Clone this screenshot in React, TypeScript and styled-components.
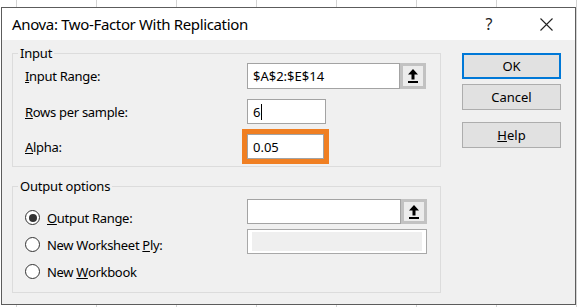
import React from "react";
import styled, { createGlobalStyle } from "styled-components";

const Global = createGlobalStyle`
  html, body { margin: 0; padding: 0; background: #fff; }
  body { font-family: "Segoe UI", "Noto Sans", "Liberation Sans", sans-serif; }
  * { box-sizing: border-box; }
`;

const FONT = `"Segoe UI", "Noto Sans", "Liberation Sans", sans-serif`;

const Page = styled.div`
  width: 577px;
  height: 307px;
  overflow: hidden;
  background-color: #fff;
  background-image: linear-gradient(to right, #d4d4d4 1px, transparent 1px);
  background-size: 80px 100%;
  background-position: 16px 0;
  padding: 7px 0 0 1px;
`;

const Dialog = styled.div`
  width: 575px;
  height: 298px;
  border: 1px solid #5c5c5c;
  background: #f0f0f0;
  display: flex;
  flex-direction: column;
  font-family: ${FONT};
  color: #000;
`;

const TitleBar = styled.div`
  height: 32px;
  flex: none;
  background: #fff;
  display: flex;
  align-items: center;
  padding-left: 10px;
`;

const Title = styled.div`
  flex: 1;
  font-size: 15px;
  line-height: 20px;
  letter-spacing: -0.35px;
  color: #000;
`;

const TitleButton = styled.div<{ $w: number }>`
  width: ${(p) => p.$w}px;
  height: 32px;
  display: flex;
  align-items: center;
  justify-content: center;
  font-size: 16px;
  color: #222;
`;

const Body = styled.div`
  display: flex;
  align-items: flex-start;
  padding: 4px 0 0 10px;
`;

const LeftCol = styled.div`
  width: 429px;
  display: flex;
  flex-direction: column;
  gap: 10px;
`;

const Group = styled.fieldset`
  margin: 0;
  padding: 0;
  border: 1px solid #dcdcdc;
  min-width: 0;
`;

const Legend = styled.legend`
  margin-left: 5px;
  padding: 0 2px;
  font-size: 13px;
  line-height: 18px;
  letter-spacing: -0.2px;
`;

const InputGrid = styled.div`
  display: grid;
  grid-template-columns: 222px auto;
  grid-template-rows: 26px 25px 25px;
  row-gap: 10px;
  padding: 1px 0 7px 12px;
  align-items: center;
`;

const Label = styled.div`
  font-size: 13px;
  line-height: 18px;
  letter-spacing: -0.3px;
  white-space: nowrap;
`;

const FieldWrap = styled.div<{ $w: number }>`
  width: ${(p) => p.$w}px;
  height: 100%;
  display: flex;
`;

const TextBox = styled.div<{ $w?: number; $highlight?: boolean }>`
  ${(p) => (p.$w ? `width: ${p.$w}px;` : "flex: 1;")}
  height: 100%;
  background: #fff;
  border: 1px solid #a3a3a3;
  font-size: 13px;
  line-height: 18px;
  padding: 0 5px;
  display: flex;
  align-items: center;
  ${(p) => (p.$highlight ? "outline: 5px solid #f07f22; outline-offset: 0;" : "")}
`;

const Caret = styled.span`
  display: inline-block;
  width: 1px;
  height: 16px;
  background: #000;
  margin-left: 1px;
`;

const UploadBtn = styled.div`
  width: 26px;
  height: 100%;
  border: 3px solid #c2c2c2;
  background: #ececec;
  display: flex;
  align-items: center;
  justify-content: center;
`;

const OutputGrid = styled.div`
  display: grid;
  grid-template-columns: 222px auto;
  padding: 0 0 7px 12px;
`;

const RadioList = styled.div`
  display: flex;
  flex-direction: column;
  padding-top: 9px;
`;

const RadioRow = styled.div`
  height: 27px;
  display: flex;
  align-items: center;
  gap: 7px;
  font-size: 13px;
  letter-spacing: -0.3px;
  white-space: nowrap;
`;

const RadioCircle = styled.span<{ $on?: boolean }>`
  width: 15px;
  height: 15px;
  border-radius: 50%;
  border: 1px solid #333;
  background: #fff;
  display: flex;
  align-items: center;
  justify-content: center;
  flex: none;
  &::after {
    content: "";
    width: 8px;
    height: 8px;
    border-radius: 50%;
    background: ${(p) => (p.$on ? "#333" : "transparent")};
  }
`;

const FieldStack = styled.div`
  display: flex;
  flex-direction: column;
  gap: 5px;
  padding-top: 4px;
`;

const FieldSlot = styled.div`
  height: 25px;
`;

const DisabledBox = styled.div`
  width: 180px;
  height: 25px;
  border: 1px solid #a8a8a8;
  background: #fff;
  padding: 2px 4px;
`;

const DisabledFill = styled.div`
  width: 100%;
  height: 100%;
  background: #efefef;
`;

const ButtonCol = styled.div`
  margin: 9px 0 0 21px;
  width: 99px;
  display: flex;
  flex-direction: column;
`;

const Button = styled.div<{ $primary?: boolean; $mt: number }>`
  height: 26px;
  margin-top: ${(p) => p.$mt}px;
  background: #e1e1e1;
  border: ${(p) => (p.$primary ? "2px solid #0078d7" : "1px solid #adadad")};
  display: flex;
  align-items: center;
  justify-content: center;
  font-size: 13px;
`;

const UploadIcon = () => (
  <svg width="10" height="14" viewBox="0 0 10 14">
    <path d="M5 0 L10 5.5 H6.5 V10.5 H3.5 V5.5 H0 Z" fill="#000" />
    <rect x="0" y="12" width="10" height="2" fill="#000" />
  </svg>
);

const CloseIcon = () => (
  <svg width="13" height="13" viewBox="0 0 13 13">
    <path d="M0.5 0.5 L12.5 12.5 M12.5 0.5 L0.5 12.5" stroke="#222" strokeWidth="1.1" />
  </svg>
);

export default function App() {
  return (
    <Page>
      <Global />
      <Dialog>
        <TitleBar>
          <Title>Anova: Two-Factor With Replication</Title>
          <TitleButton $w={68}>?</TitleButton>
          <TitleButton $w={46}>
            <CloseIcon />
          </TitleButton>
          <TitleButton $w={6} />
        </TitleBar>
        <Body>
          <LeftCol>
            <Group>
              <Legend>Input</Legend>
              <InputGrid>
                <Label>
                  <u>I</u>nput Range:
                </Label>
                <FieldWrap $w={179}>
                  <TextBox>$A$2:$E$14</TextBox>
                  <UploadBtn>
                    <UploadIcon />
                  </UploadBtn>
                </FieldWrap>
                <Label>
                  <u>R</u>ows per sample:
                </Label>
                <FieldWrap $w={79}>
                  <TextBox $w={79}>
                    6<Caret />
                  </TextBox>
                </FieldWrap>
                <Label>
                  <u>A</u>lpha:
                </Label>
                <FieldWrap $w={77}>
                  <TextBox $w={77} $highlight>
                    0.05
                  </TextBox>
                </FieldWrap>
              </InputGrid>
            </Group>
            <Group>
              <Legend>Output options</Legend>
              <OutputGrid>
                <RadioList>
                  <RadioRow>
                    <RadioCircle $on />
                    <span>
                      <u>O</u>utput Range:
                    </span>
                  </RadioRow>
                  <RadioRow>
                    <RadioCircle />
                    <span>
                      New Worksheet <u>P</u>ly:
                    </span>
                  </RadioRow>
                  <RadioRow>
                    <RadioCircle />
                    <span>
                      New <u>W</u>orkbook
                    </span>
                  </RadioRow>
                </RadioList>
                <FieldStack>
                  <FieldSlot>
                    <FieldWrap $w={180}>
                      <TextBox />
                      <UploadBtn>
                        <UploadIcon />
                      </UploadBtn>
                    </FieldWrap>
                  </FieldSlot>
                  <DisabledBox>
                    <DisabledFill />
                  </DisabledBox>
                </FieldStack>
              </OutputGrid>
            </Group>
          </LeftCol>
          <ButtonCol>
            <Button $primary $mt={0}>OK</Button>
            <Button $mt={5}>Cancel</Button>
            <Button $mt={12}>
              <u>H</u>elp
            </Button>
          </ButtonCol>
        </Body>
      </Dialog>
    </Page>
  );
}
